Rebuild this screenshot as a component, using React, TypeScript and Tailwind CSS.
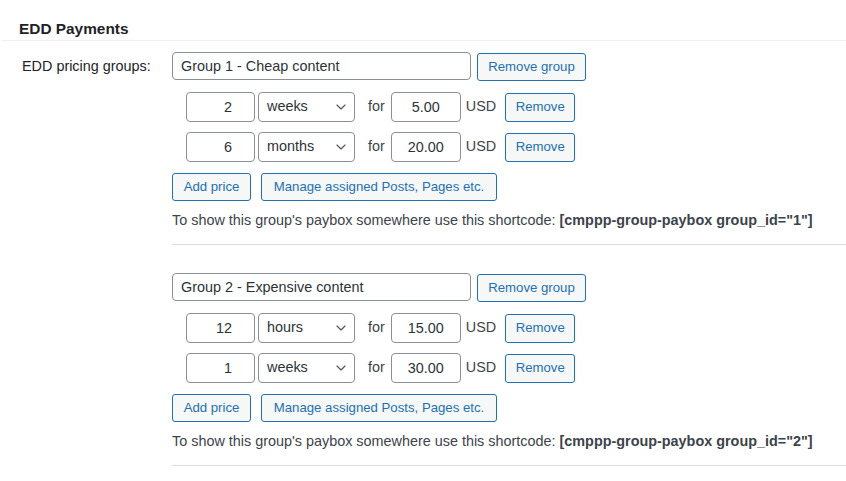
import { ChevronDown } from 'lucide-react';

type Price = { count: string; unit: string; amount: string };
type Group = { id: number; name: string; prices: Price[] };

const groups: Group[] = [
  {
    id: 1,
    name: 'Group 1 - Cheap content',
    prices: [
      { count: '2', unit: 'weeks', amount: '5.00' },
      { count: '6', unit: 'months', amount: '20.00' },
    ],
  },
  {
    id: 2,
    name: 'Group 2 - Expensive content',
    prices: [
      { count: '12', unit: 'hours', amount: '15.00' },
      { count: '1', unit: 'weeks', amount: '30.00' },
    ],
  },
];

const btn =
  'h-[28px] rounded-[3px] border border-[#2271b1] bg-[#f6f7f7] px-[9px] text-[13.2px] leading-none text-[#2271b1] whitespace-nowrap';

const input =
  'rounded-[4px] border border-[#8c8f94] bg-white text-[14.4px] text-[#2c3338] outline-none';

function PriceRow({ price }: { price: Price }) {
  return (
    <div className="flex items-center h-[30px]">
      <input
        className={`${input} w-[69px] h-[30px] text-right pr-[22px]`}
        defaultValue={price.count}
      />
      <div className={`${input} ml-[3px] w-[97px] h-[30px] flex items-center justify-between pl-[8px] pr-[5px]`}>
        <span>{price.unit}</span>
        <ChevronDown className="w-[16px] h-[16px] text-[#50575e]" strokeWidth={1.75} />
      </div>
      <span className="ml-[13px] text-[14.4px] text-[#3c434a]">for</span>
      <input
        className={`${input} ml-[6px] w-[70px] h-[30px] text-center`}
        defaultValue={price.amount}
      />
      <span className="ml-[5px] text-[14.4px] text-[#3c434a]">USD</span>
      <button className={`${btn} ml-[9px] w-[70px] h-[29px]`}>Remove</button>
    </div>
  );
}

function GroupBlock({ group }: { group: Group }) {
  return (
    <div>
      <div className="flex items-start">
        <input
          className={`${input} w-[299px] h-[28px] px-[8px]`}
          defaultValue={group.name}
        />
        <button className={`${btn} ml-[6px] mt-[1px] w-[109px]`}>Remove group</button>
      </div>
      <div className="ml-[14px] mt-[11px] flex flex-col gap-[10px]">
        {group.prices.map((p, i) => (
          <PriceRow key={i} price={p} />
        ))}
      </div>
      <div className="mt-[11px] flex gap-[10px]">
        <button className={`${btn} w-[79px]`}>Add price</button>
        <button className={`${btn} w-[236px]`}>Manage assigned Posts, Pages etc.</button>
      </div>
      <p className="mt-[9px] text-[14.4px] leading-[20px] text-[#3c434a] whitespace-nowrap">
        To show this group's paybox somewhere use this shortcode:{' '}
        <b className="font-bold text-[#3c434a]">[cmppp-group-paybox group_id="{group.id}"]</b>
      </p>
      <div className="mt-[14px] border-t border-[#dcdcde]" />
    </div>
  );
}

export default function App() {
  return (
    <div
      className="min-h-screen w-[846px] bg-white overflow-hidden"
      style={{ fontFamily: '"Liberation Sans", Arial, sans-serif' }}
    >
      <h2 className="pl-[19px] pt-[19px] text-[15.4px] leading-[20px] font-bold text-[#1d2327]">
        EDD Payments
      </h2>
      <div className="mt-[1px] ml-[2px] border-t border-[#f0f0f1]" />
      <div className="flex pt-[11px]">
        <div className="w-[172px] shrink-0 pl-[22px] pt-[4px] text-[14.4px] leading-[20px] text-[#1d2327]">
          EDD pricing groups:
        </div>
        <div className="flex-1 flex flex-col gap-[28px]">
          {groups.map((g) => (
            <GroupBlock key={g.id} group={g} />
          ))}
        </div>
      </div>
    </div>
  );
}
